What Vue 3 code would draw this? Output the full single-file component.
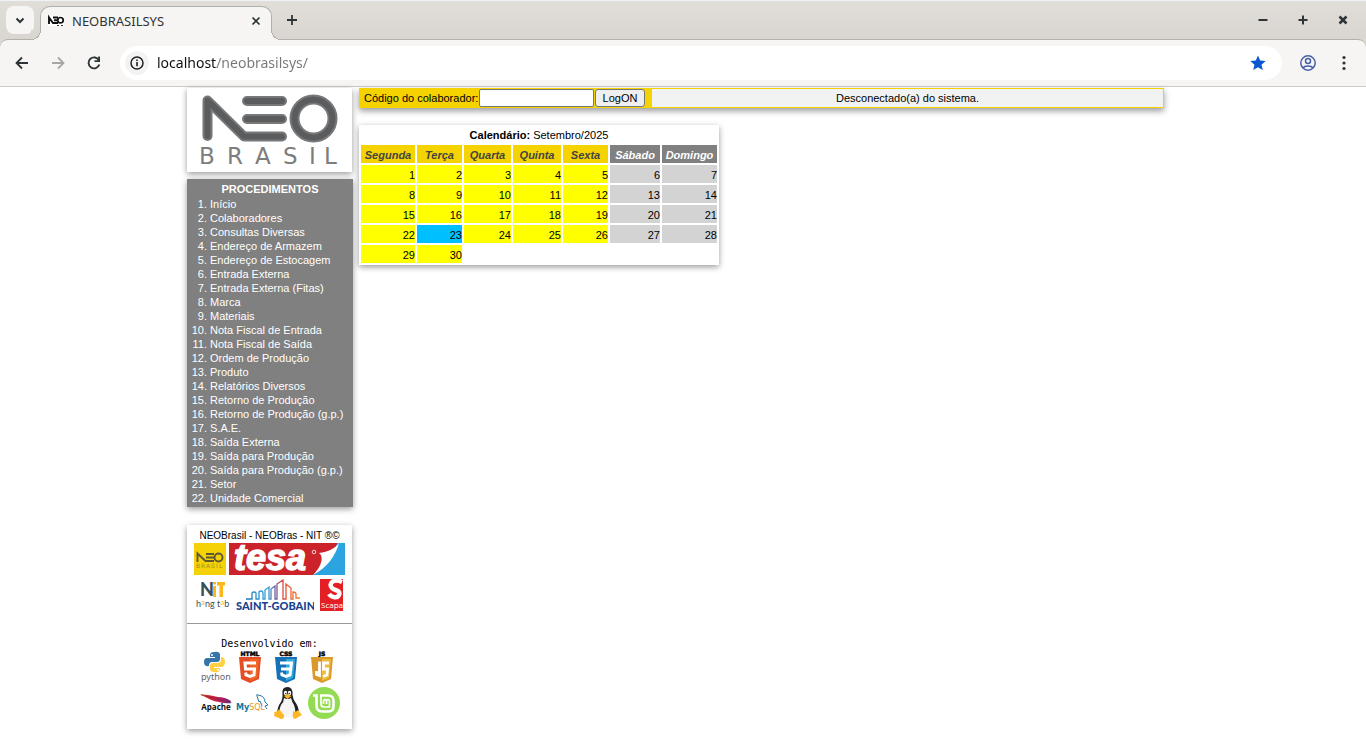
<script setup>
import { ref } from 'vue'

const address = ref('localhost/neobrasilsys/')
const code = ref('')

const procedures = [
  'Início', 'Colaboradores', 'Consultas Diversas', 'Endereço de Armazem',
  'Endereço de Estocagem', 'Entrada Externa', 'Entrada Externa (Fitas)', 'Marca',
  'Materiais', 'Nota Fiscal de Entrada', 'Nota Fiscal de Saída', 'Ordem de Produção',
  'Produto', 'Relatórios Diversos', 'Retorno de Produção', 'Retorno de Produção (g.p.)',
  'S.A.E.', 'Saída Externa', 'Saída para Produção', 'Saída para Produção (g.p.)',
  'Setor', 'Unidade Comercial',
]

const weekdays = ['Segunda', 'Terça', 'Quarta', 'Quinta', 'Sexta', 'Sábado', 'Domingo']
const today = 23
const weeks = []
for (let start = 1; start <= 30; start += 7) {
  weeks.push(Array.from({ length: 7 }, (_, i) => (start + i <= 30 ? start + i : null)))
}

function dayClass(day, index) {
  if (day === null) return 'empty'
  if (day === today) return 'today'
  return index > 4 ? 'weekend' : 'workday'
}
</script>

<template>
  <div class="window">
    <header class="browser">
      <div class="strip">
        <button class="tab-search" aria-label="Pesquisar guias">
          <svg width="28" height="28" viewBox="0 0 28 28"><path d="M10.500 12.500 L14 16 L17.500 12.500" fill="none" stroke="#2e3436" stroke-width="2" /></svg>
        </button>
        <div class="tab">
          <svg class="favicon" width="16" height="16" viewBox="0 0 16 16">
            <rect y="3" width="16" height="10" fill="#fff" />
            <path d="M1 11V4.500L5 10H10 M5 4.500H10 M6 7.200H10" fill="none" stroke="#111" stroke-width="1.900" />
            <circle cx="12.500" cy="7.200" r="2.700" fill="none" stroke="#111" stroke-width="1.700" />
            <path d="M9 12.500H11M13 12.500H15" stroke="#333" />
          </svg>
          <span class="tab-title">NEOBRASILSYS</span>
          <button class="tab-close" aria-label="Fechar guia">
            <svg width="16" height="16" viewBox="0 0 16 16"><path d="M4.500 4.500L11.500 11.500M11.500 4.500L4.500 11.500" stroke="#2e3436" stroke-width="1.700" /></svg>
          </button>
        </div>
        <button class="new-tab" aria-label="Nova guia">
          <svg width="16" height="16" viewBox="0 0 16 16"><path d="M3 8H13M8 3V13" stroke="#2e3436" stroke-width="1.800" /></svg>
        </button>
        <div class="controls">
          <button aria-label="Minimizar"><svg width="16" height="16" viewBox="0 0 16 16"><path d="M3.500 8H12.500" stroke="#2e3436" stroke-width="2" /></svg></button>
          <button aria-label="Maximizar"><svg width="16" height="16" viewBox="0 0 16 16"><path d="M3.500 8H12.500M8 3.500V12.500" stroke="#2e3436" stroke-width="2" /></svg></button>
          <button aria-label="Fechar"><svg width="16" height="16" viewBox="0 0 16 16"><path d="M4.500 4.500L11.500 11.500M11.500 4.500L4.500 11.500" stroke="#2e3436" stroke-width="2.500" /></svg></button>
        </div>
      </div>

      <div class="toolbar">
        <button aria-label="Voltar"><svg width="20" height="20" viewBox="0 0 20 20"><path d="M16 10H5M10 4.500L4.500 10L10 15.500" fill="none" stroke="#2e3436" stroke-width="1.800" /></svg></button>
        <button aria-label="Avançar"><svg width="20" height="20" viewBox="0 0 20 20"><path d="M4 10H15M10 4.500L15.500 10L10 15.500" fill="none" stroke="#a5a6a5" stroke-width="1.800" /></svg></button>
        <button aria-label="Recarregar"><svg width="20" height="20" viewBox="0 0 20 20"><path d="M15 7.500A5.500 5.500 0 1 0 15.300 11.500" fill="none" stroke="#2e3436" stroke-width="1.900" /><path d="M16 3.500V9H10.500V7.300H14.200V3.500Z" fill="#2e3436" /></svg></button>
        <div class="omnibox">
          <button class="site-info" aria-label="Informações do site">
            <svg width="16" height="16" viewBox="0 0 16 16"><circle cx="8" cy="8" r="6" fill="none" stroke="#202124" stroke-width="1.500" /><path d="M8 7V11.200M8 4.500V6" stroke="#202124" stroke-width="1.600" /></svg>
          </button>
          <input v-model="address" class="address" type="text" aria-label="Endereço" />
          <button class="star" aria-label="Favorito"><svg width="18" height="18" viewBox="0 0 18 18"><path d="M9 1.500L11.200 6.600L16.700 7.100L12.500 10.700L13.800 16.100L9 13.200L4.200 16.100L5.500 10.700L1.300 7.100L6.800 6.600Z" fill="#0b57d0" /></svg></button>
        </div>
        <button class="profile" aria-label="Perfil"><svg width="18" height="18" viewBox="0 0 18 18"><g fill="none" stroke="#4660a8" stroke-width="1.500"><circle cx="9" cy="9" r="7.200" /><circle cx="9" cy="7" r="2.500" /><path d="M3.800 14C5.800 11.200 12.200 11.200 14.200 14" /></g></svg></button>
        <button class="menu-button" aria-label="Menu"><svg width="16" height="16" viewBox="0 0 16 16" fill="#2e3436"><circle cx="8" cy="2.500" r="1.600" /><circle cx="8" cy="8" r="1.600" /><circle cx="8" cy="13.500" r="1.600" /></svg></button>
      </div>
    </header>

    <div class="page">
      <aside class="sidebar">
        <div class="card brand">
          <svg width="165" height="84" viewBox="0 0 165 84" role="img" aria-label="NEO Brasil">
            <g fill="none" stroke-linecap="round" stroke-linejoin="round">
              <g stroke="#77787a" stroke-width="10">
                <path d="M20.500 48V12.500L57 48.500H95" /><path d="M60 13H95M60 31H95" /><circle cx="126.500" cy="30.500" r="19" />
              </g>
              <g stroke="#5b5c5d" stroke-width="6">
                <path d="M20.500 48V12.500L57 48.500H95" /><path d="M60 13H95M60 31H95" /><circle cx="126.500" cy="30.500" r="19" />
              </g>
            </g>
            <text x="12 40 68 96 122 137" y="76" font-family="'DejaVu Sans', sans-serif" font-size="23" fill="#7d7d7d">BRASIL</text>
          </svg>
        </div>

        <nav class="card procedures">
          <h2>PROCEDIMENTOS</h2>
          <ol>
            <li v-for="item in procedures" :key="item"><a href="#">{{ item }}</a></li>
          </ol>
        </nav>

        <section class="card credits">
          <p class="companies">NEOBrasil - NEOBras - NIT ®©</p>
          <div class="partners first">
            <svg width="32" height="32" viewBox="0 0 32 32" role="img" aria-label="NEO Brasil">
              <rect width="32" height="32" fill="#f5d108" />
              <g fill="none" stroke="#5d5830" stroke-width="1.900"><path d="M3.500 19V10.500L11.500 18H20" /><path d="M12 11H20M12 14.500H20" /><circle cx="24.500" cy="14.500" r="4" /></g>
              <text x="2 7 12 17 22 25" y="25" font-family="'DejaVu Sans', sans-serif" font-size="6" fill="#a08e20">BRASIL</text>
            </svg>
            <svg width="116" height="32" viewBox="0 0 116 32" role="img" aria-label="tesa">
              <rect width="116" height="32" fill="#cc2229" />
              <path d="M116 0V32H84C97 25 105 12 108 0Z" fill="#2ca4e0" />
              <path d="M110 0C107 5 99 9 90 10C95 13 93 23 84 32C98 25 107 12 110 0Z" fill="#fff" />
              <text x="5" y="27" font-family="'Liberation Sans', Arial, sans-serif" font-size="36" font-weight="700" font-style="italic" fill="#fff" stroke="#fff" stroke-width="1.500">tesa</text>
              <circle cx="85" cy="9" r="1.800" fill="none" stroke="#fff" stroke-width="0.800" />
            </svg>
          </div>
          <div class="partners second">
            <svg width="34" height="32" viewBox="0 0 34 32" role="img" aria-label="NIT hang tab">
              <text x="4" y="17" font-family="Lato, sans-serif" font-size="18" font-weight="900" fill="#35505b">N</text>
              <path d="M17 7H20V18H17Z M17 3H20V5.500H17Z M21 3H29V6.500H27V18H23.500V6.500H21Z" fill="#fdb71a" />
              <text x="0" y="28" font-family="Lato, sans-serif" font-size="9" fill="#35505b">h<tspan fill="#fdb71a" font-size="8" dy="-2">a</tspan><tspan dy="2">ng t</tspan><tspan fill="#fdb71a" font-size="8" dy="-2">a</tspan><tspan dy="2">b</tspan></text>
            </svg>
            <svg width="78" height="32" viewBox="0 0 78 32" role="img" aria-label="Saint-Gobain">
              <defs><linearGradient id="skyline" gradientUnits="userSpaceOnUse" x1="10" y1="0" x2="63" y2="0"><stop offset="0" stop-color="#1a75bc" /><stop offset="0.400" stop-color="#31a7d8" /><stop offset="0.560" stop-color="#75599c" /><stop offset="0.700" stop-color="#e54736" /><stop offset="1" stop-color="#f08225" /></linearGradient></defs>
              <path d="M10 20H16V14Q16 13 18 13Q20 13 20 14V20H23V13Q23 12 25 12Q27 12 27 14V20H29V11L33 8V20H35V10L39 7V20H41V5L47 1V20H50V5L55 9V20H57V13Q60 13 60 15V19H64" fill="none" stroke="url(#skyline)" stroke-width="1.300" />
              <text x="0" y="31" font-family="Lato, sans-serif" font-size="11" font-weight="900" fill="#17428c">SAINT-GOBAIN</text>
            </svg>
            <svg width="23" height="32" viewBox="0 0 23 32" role="img" aria-label="Scapa">
              <rect width="23" height="32" fill="#e31e25" />
              <path d="M22 3C13 -1 8 5 12 9C15 12 21 11 19 16C17 20 11 18 9 15" fill="none" stroke="#fff" stroke-width="4.500" />
              <text x="1" y="29" font-family="'Open Sans', sans-serif" font-size="8" fill="#fff">Scapa</text>
            </svg>
          </div>
          <hr />
          <p class="developed">Desenvolvido em:</p>
          <div class="tech">
            <svg width="32" height="32" viewBox="0 0 32 32" role="img" aria-label="python">
              <path d="M10 7V4Q10 1 14 1Q19 0 20 3V8Q20 11 17 11H12Q9 11 9 15Q4 16 4 11Q4 7 7 7H15V6H10Z" fill="#3775a9" />
              <path d="M21 6Q25 6 25 11Q25 16 21 16H14V17H20V19Q19 22 14 21Q10 21 10 18V15Q10 12 13 12H17Q21 12 21 9Z" fill="#ffd043" />
              <circle cx="12" cy="4" r="1" fill="#fff" /><circle cx="18" cy="19" r="1" fill="#fff" />
              <text x="1" y="29" font-family="'Noto Sans', sans-serif" font-size="9" fill="#666">python</text>
            </svg>
            <svg width="32" height="32" viewBox="2 0 32 32" role="img" aria-label="HTML 5">
              <text x="16" y="5" text-anchor="middle" font-family="'DejaVu Sans', sans-serif" font-size="6" font-weight="700" fill="#000" stroke="#000" stroke-width="0.500">HTML</text>
              <path d="M5 6H27L25 28L16 32L7 28Z" fill="#e44d26" /><path d="M16 8H25L23 27L16 30Z" fill="#f16529" />
              <path d="M22 12H11L11.500 18H20.500L20 24L16 25.500L12 24L11.700 21.500" fill="none" stroke="#fff" stroke-width="3" />
            </svg>
            <svg width="32" height="32" viewBox="2 0 32 32" role="img" aria-label="CSS 3">
              <text x="16" y="5" text-anchor="middle" font-family="'DejaVu Sans', sans-serif" font-size="6" font-weight="700" fill="#000" stroke="#000" stroke-width="0.500">CSS</text>
              <path d="M5 6H27L25 28L16 32L7 28Z" fill="#1572b6" /><path d="M16 8H25L23 27L16 30Z" fill="#33a9dc" />
              <path d="M10 12H21.500L20 24L16 25.500L12 24L11.500 21.500M11 18H20.500" fill="none" stroke="#fff" stroke-width="3" />
            </svg>
            <svg width="32" height="32" viewBox="2 0 32 32" role="img" aria-label="JS">
              <text x="16" y="5" text-anchor="middle" font-family="'DejaVu Sans', sans-serif" font-size="6" font-weight="700" fill="#000" stroke="#000" stroke-width="0.500">JS</text>
              <path d="M5 6H27L25 28L16 32L7 28Z" fill="#d99a2b" /><path d="M16 8H25L23 27L16 30Z" fill="#eebb3c" />
              <path d="M23 12H17.500V18H21.500L21 24L17 25.500M13.500 10.500V24.500L10.500 23.500V20" fill="none" stroke="#fff" stroke-width="2.800" />
            </svg>
          </div>
          <div class="tech">
            <svg width="32" height="32" viewBox="0 0 32 32" role="img" aria-label="Apache">
              <defs><linearGradient id="feather"><stop offset="0" stop-color="#e77a24" /><stop offset="0.300" stop-color="#d22128" /><stop offset="0.700" stop-color="#ad2063" /><stop offset="1" stop-color="#5b2e7a" /></linearGradient></defs>
              <path d="M0 7Q10 8 18 10Q25 10 31 14L30 15L32 16Q25 17 19 15Q11 14 0 7Z" fill="url(#feather)" />
              <path d="M1 8L31 15" stroke="#842052" stroke-width="0.700" />
              <text x="16" y="23" text-anchor="middle" font-family="'Open Sans', sans-serif" font-size="8" font-weight="700" fill="#111">Apache</text>
            </svg>
            <svg width="32" height="32" viewBox="0 0 32 32" role="img" aria-label="MySQL">
              <path d="M21 9Q20 7 22 8Q29 9 29 15L32 18L29 19L31 22M21 9L23 15L24 14L26 19" fill="none" stroke="#287c9e" stroke-width="1" />
              <text x="0" y="23" font-family="'DejaVu Sans', sans-serif" font-size="8" font-weight="700" fill="#16769b">My<tspan fill="#ee9418" font-weight="400">SQL</tspan></text>
            </svg>
            <svg width="32" height="32" viewBox="0 0 32 32" role="img" aria-label="Linux">
              <path d="M10.500 7Q9.500 0 15.500 0Q21 0 20.500 8Q21 13 24.500 17Q28 23 26 29H6Q4 25 7 18Q11 13 10.500 7Z" fill="#222" />
              <path d="M12 11Q16 13 19 11Q20 15 22 18Q25 26 21 30H9Q6 24 9 18Q12 15 12 11Z" fill="#f5f5f5" />
              <ellipse cx="13.500" cy="6" rx="1.700" ry="2.200" fill="#fff" /><ellipse cx="17.500" cy="6" rx="1.700" ry="2.200" fill="#fff" />
              <circle cx="13.800" cy="6.500" r="0.700" fill="#111" /><circle cx="17.200" cy="6.500" r="0.700" fill="#111" />
              <path d="M12 9L15.500 7L19.500 9L15.500 12Z" fill="#f8b51d" />
              <path d="M7 22L12 28Q13 32 9 32L2 29Q3 26 2 25Q6 25 7 22Z M21 24Q23 26 26 23L30 28L23 32Q20 32 21 24Z" fill="#fdb827" />
            </svg>
            <svg width="32" height="32" viewBox="0 0 32 32" role="img" aria-label="Linux Mint">
              <circle cx="16" cy="16" r="16" fill="#92db52" />
              <path d="M5 8.500H8.500V18.500Q8.500 24.500 14.500 24.500H20.500Q25.500 24.500 25.500 19V14Q25.500 8.500 20 8.500H12" fill="none" stroke="#fff" stroke-width="2.600" />
              <path d="M13 9V17Q13 20 16 20H21.500V14.500Q21.500 12.500 20 12.500Q18.500 12.500 18.500 14.500V17M18.500 14.500Q18.500 12.500 17 12.500Q15.500 12.500 15.500 14.500V17" fill="none" stroke="#fff" stroke-width="1.700" />
            </svg>
          </div>
        </section>
      </aside>

      <main class="content">
        <div class="login-bar">
          <form class="login" @submit.prevent>
            <label for="code">Código do colaborador:</label>
            <input id="code" v-model="code" type="text" />
            <button type="submit">LogON</button>
          </form>
          <div class="status">Desconectado(a) do sistema.</div>
        </div>

        <div class="calendar-card">
          <table class="calendar">
            <caption><b>Calendário:</b> Setembro/2025</caption>
            <thead>
              <tr><th v-for="(day, i) in weekdays" :key="day" scope="col" :class="['day-' + i, { off: i > 4 }]">{{ day }}</th></tr>
            </thead>
            <tbody>
              <tr v-for="(week, w) in weeks" :key="w">
                <td v-for="(day, i) in week" :key="i" :class="dayClass(day, i)">{{ day }}</td>
              </tr>
            </tbody>
          </table>
        </div>
      </main>
    </div>
  </div>
</template>

<style>
body { margin: 0; background: #fff; }
</style>

<style scoped>
* { box-sizing: border-box; }
svg { display: block; flex: none; }
.window { font: 11px/14px "Liberation Sans", Arial, sans-serif; color: #000; }
.browser { font-family: "Noto Sans", "Open Sans", sans-serif; background: #dcd9d5; }
.browser button { display: flex; align-items: center; justify-content: center; flex: none; padding: 0; border: 0; background: none; }

.strip { display: flex; height: 39px; padding: 5px 15px 0 6px; border-top: 1px solid #f0f3f6; background: linear-gradient(#e1deda, #d9d6d2); }
.browser .tab-search { width: 28px; height: 28px; border-radius: 8px; background: #f6f5f4; }
.tab { position: relative; z-index: 1; display: flex; align-items: center; width: 232px; height: 34px; margin-left: 6px; padding: 0 7px 6px; border: 1px solid #b3b0ab; border-bottom: 0; border-radius: 10px 10px 0 0; background: #f6f5f4; }
.tab::before, .tab::after { content: ""; position: absolute; bottom: 0; width: 10px; height: 10px; background: radial-gradient(circle at 0 0, #dad7d3 9px, #b3b0ab 9px 10px, #f6f5f4 10px); }
.tab::before { left: -10px; }
.tab::after { right: -10px; transform: scaleX(-1); }
.favicon { margin-right: 8px; }
.tab-title { flex: 1; font-size: 13px; line-height: 18px; color: #2e3436; }
.new-tab { width: 40px; height: 28px; }
.controls { display: flex; gap: 24px; height: 28px; margin-left: auto; }

.toolbar { display: flex; align-items: center; height: 48px; padding: 0 12px; border: 1px solid #b3b0ab; border-width: 1px 0; border-bottom-color: #cfc9c4; border-radius: 8px 8px 0 0; background: #f6f5f4; }
.toolbar > button { width: 20px; height: 20px; }
.toolbar > button + button { margin-left: 16px; }
.omnibox { display: flex; flex: 1; align-items: center; height: 34px; margin-left: 16px; padding: 0 15px 0 5px; border-radius: 17px; background: #fff; }
.browser .site-info { width: 24px; height: 24px; border-radius: 50%; background: #f4f3f2; }
.address { flex: 1; min-width: 0; height: 24px; padding: 0; margin-left: 8px; border: 0; outline: 0; font: 14px/24px "Noto Sans", "Open Sans", sans-serif; color: transparent; background: linear-gradient(90deg, #111 60px, #777 60px) text; }
.toolbar > .profile { margin-left: 16px; }

.page { display: flex; align-items: flex-start; gap: 6px; max-width: 992px; margin: 0 auto; padding: 1px 15px 15px 0; }
.card, .calendar-card { box-shadow: 0 2px 6px rgba(0, 0, 0, 0.4); }
.sidebar { flex: none; width: 166px; }
.brand, .credits { width: 165px; background: #fff; }
.procedures { margin-top: 7px; padding: 3px 0 2px; background: #808080; color: #fff; }
.procedures h2 { margin: 0; font-size: 11px; line-height: 15px; text-align: center; }
.procedures ol { margin: 0; padding: 0 0 0 23px; }
.procedures a { color: #fff; text-decoration: none; }
.credits { margin-top: 18px; padding: 4px 0 6px; text-align: center; }
.companies { margin: 0; font-size: 10px; }
.partners { display: flex; justify-content: center; }
.first { gap: 3px; }
.second { gap: 6px; margin-top: 4px; }
hr { margin: 12px 0 13px; border: 0; border-top: 1px solid #999; }
.developed { margin: 0; font: 10px/14px "DejaVu Sans Mono", monospace; }
.tech { display: flex; justify-content: center; gap: 4px; margin-bottom: 4px; }

.content { flex: 1; min-width: 0; }
.login-bar { display: flex; height: 20px; border: 1px solid #f5d300; box-shadow: 0 3px 6px rgba(0, 0, 0, 0.4); background: #f5d300; }
.login { display: flex; align-items: center; flex: none; width: 292px; padding-left: 4px; }
.login label { flex: 1; white-space: nowrap; }
.login input { width: 115px; height: 18px; padding: 1px 2px; border: 1px solid #767676; border-radius: 2px; font: inherit; background: #fff; }
.login button { width: 50px; height: 18px; margin: 0 7px 0 1px; padding: 0; border: 1px solid #767676; border-radius: 3px; font: inherit; color: #000; background: #efefef; }
.status { flex: 1; line-height: 18px; text-align: center; background: #f1f3f3; }

.calendar-card { width: 360px; margin-top: 17px; }
.calendar { width: 100%; border-spacing: 2px; table-layout: fixed; }
.calendar caption { padding: 3px 0 1px; }
.calendar th, .calendar td { height: 18px; padding: 2px 0 0; line-height: 16px; }
.calendar th { font-style: italic; text-align: center; background: #f5d300; color: #444; }
.calendar th.off { background: #808080; color: #fff; }
.calendar td { text-align: right; }
.day-0 { width: 54px; }
.day-1, .day-4 { width: 45px; }
.day-2 { width: 47px; }
.day-3 { width: 48px; }
.day-5 { width: 50px; }
.day-6 { width: 55px; }
.workday { background: #ff0; }
.weekend { background: #d3d3d3; }
.today { background: #00bfff; }
</style>
